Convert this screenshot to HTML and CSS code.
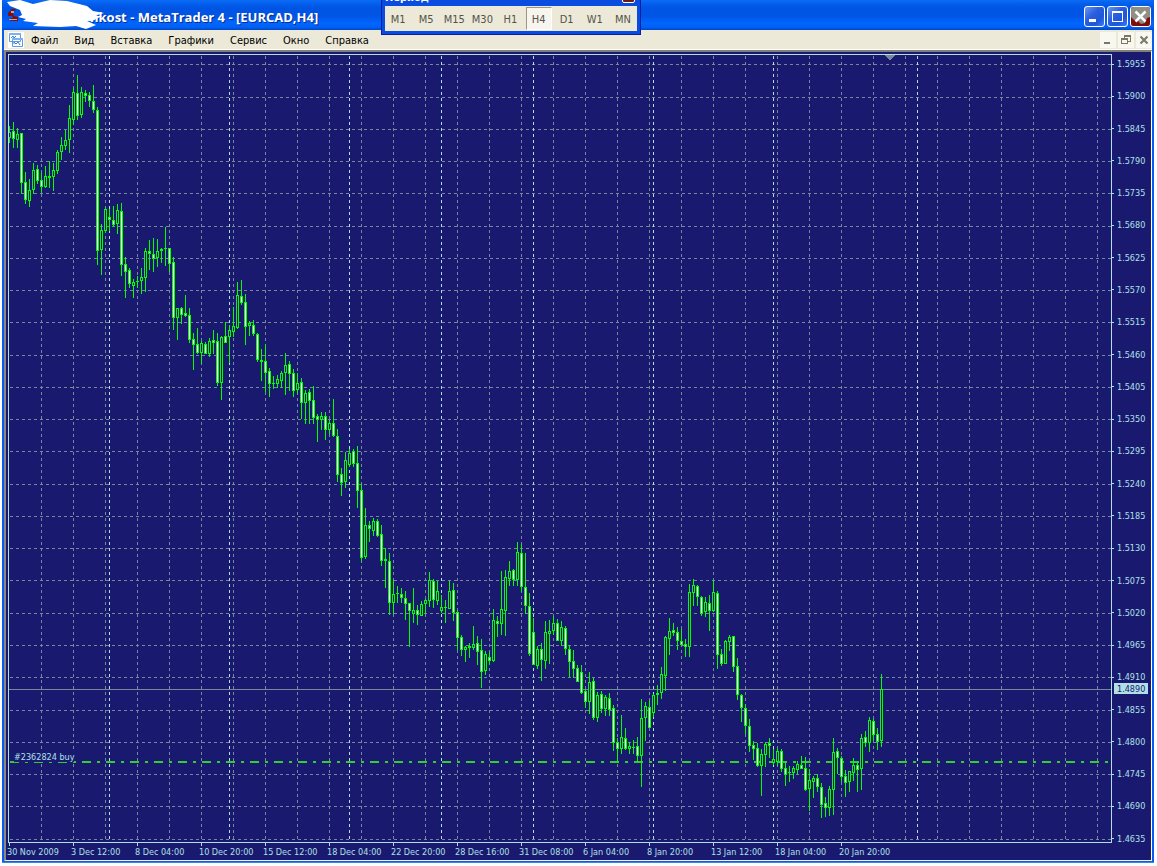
FILE: index.html
```
<!DOCTYPE html>
<html lang="ru">
<head>
<meta charset="utf-8">
<title>MetaTrader 4 - [EURCAD,H4]</title>
<link rel="stylesheet" href="styles.css">
</head>
<body>
<main class="window">
  <header class="titlebar">
    <svg class="scribble" width="104" height="32" viewBox="0 0 104 32" aria-hidden="true">
      <path d="M6 14l4-4 4 0-3 4 1 3 4 1v4H9l-3-2 5-1-1-2-4 0z" fill="#7b1010"/>
      <path d="M9 12h3v2H9zM7 20h8v1H7z" fill="#c9a29c"/>
      <path d="M5 3 18 1 31 5 48 1 65 2 85 7 91 12 102 14 92 17 100 17 90 22 85 22 94 26 84 30 74 27 58 28 31 27 36 24 21 22 24 20 16 18 20 16 18 11 8 7z" fill="#fff"/>
    </svg>
    <h1 class="title">nkost - MetaTrader 4 - [EURCAD,H4]</h1>
    <div class="controls">
      <button class="control" aria-label="Свернуть"><svg width="19" height="19" viewBox="0 0 19 19"><path d="M4 12h7v3H4z" fill="#fff"/></svg></button>
      <button class="control" aria-label="Развернуть"><svg width="19" height="19" viewBox="0 0 19 19"><path d="M4 4h11v11H4zM5 6v8h9V6z" fill="#fff" fill-rule="evenodd"/></svg></button>
      <button class="control control-close" aria-label="Закрыть"><svg width="19" height="19" viewBox="0 0 19 19"><path d="M0 0h19v10l-3 1-2 5-4 1-3-3-4-1-3-3z" fill="#8f8f86"/><path d="m4.500 4.500 10 10m0-10-10 10" stroke="#fff" stroke-width="2.500"/></svg></button>
    </div>
  </header>

  <nav class="menubar">
    <svg class="doc-icon" width="16" height="16" viewBox="0 0 16 16" aria-hidden="true">
      <path d="M0 0h16v16H0z" fill="#fff"/>
      <path d="M1.500 1.500h11v8h-11zM4.500 6.500h10v8h-10z" fill="#fff" stroke="#5b9be6"/>
      <path d="M1 1h12v2H1zM4 6h11v2H4z" fill="#7db2ee"/>
      <path d="M3 6l2-2 1 2 2-2M6 12v-2l2 2 2-2 2 3" fill="none" stroke="#3c7fd6"/>
    </svg>
    <button class="menu">Файл</button>
    <button class="menu">Вид</button>
    <button class="menu">Вставка</button>
    <button class="menu">Графики</button>
    <button class="menu">Сервис</button>
    <button class="menu">Окно</button>
    <button class="menu">Справка</button>
    <div class="doc-controls">
      <button class="doc-control" aria-label="Свернуть график"><svg width="16" height="16" viewBox="0 0 16 16"><path d="M4 10h6v2H4z" fill="#7a7769"/></svg></button>
      <button class="doc-control" aria-label="Восстановить график"><svg width="16" height="16" viewBox="0 0 16 16"><path d="M6 3h7v7h-3V9h2V5H7v1H6zM3 6h7v6H3zM4 8v3h5V8z" fill="#7a7769" fill-rule="evenodd"/></svg></button>
      <button class="doc-control" aria-label="Закрыть график"><svg width="16" height="16" viewBox="0 0 16 16"><path d="m4.500 4.500 7 7m0-7-7 7" stroke="#7a7769" stroke-width="2"/></svg></button>
    </div>
  </nav>

  <section class="chart">
    <div class="plot">
      <svg class="candles" id="candles" role="img" aria-label="EURCAD, H4"></svg>
      <span class="order">#2362824 buy</span>
    </div>
    <div class="prices">
      <span>1.5955</span><span>1.5900</span><span>1.5845</span><span>1.5790</span><span>1.5735</span>
      <span>1.5680</span><span>1.5625</span><span>1.5570</span><span>1.5515</span><span>1.5460</span>
      <span>1.5405</span><span>1.5350</span><span>1.5295</span><span>1.5240</span><span>1.5185</span>
      <span>1.5130</span><span>1.5075</span><span>1.5020</span><span>1.4965</span><span>1.4910</span>
      <span>1.4855</span><span>1.4800</span><span>1.4745</span><span>1.4690</span><span>1.4635</span>
      <strong class="bid">1.4890</strong>
    </div>
    <div class="dates">
      <span>30 Nov 2009</span><span>3 Dec 12:00</span><span>8 Dec 04:00</span><span>10 Dec 20:00</span>
      <span>15 Dec 12:00</span><span>18 Dec 04:00</span><span>22 Dec 20:00</span><span>28 Dec 16:00</span>
      <span>31 Dec 08:00</span><span>6 Jan 04:00</span><span>8 Jan 20:00</span><span>13 Jan 12:00</span>
      <span>18 Jan 04:00</span><span>20 Jan 20:00</span>
    </div>
  </section>

  <aside class="palette">
    <div class="palette-title"><span class="palette-name">Период</span><button class="palette-close" aria-label="Закрыть"></button></div>
    <div class="periods">
      <button class="period">M1</button><button class="period">M5</button><button class="period">M15</button>
      <button class="period">M30</button><button class="period">H1</button><button class="period period-on">H4</button>
      <button class="period">D1</button><button class="period">W1</button><button class="period">MN</button>
    </div>
  </aside>
</main>
<script src="chart.js"></script>
</body>
</html>
```
FILE: styles.css
```
* { box-sizing: border-box; }
body {
  margin: 0;
  background: #fff;
  font: 11px/14px "DejaVu Sans Condensed", "Noto Sans", sans-serif;
}
button { margin: 0; padding: 0; border: 0; background: none; font: inherit; color: inherit; }
svg { display: block; }

.window {
  position: relative;
  margin: 0 3px 3px 2px;
  padding: 0 2px 2px;
  background: #0a5cf0;
  box-shadow: inset 0 -1px #3a86e8;
}

.titlebar {
  display: flex;
  align-items: center;
  height: 30px;
  margin: 0 -2px;
  padding-right: 3px;
  background: linear-gradient(#0a6cf8 0, #0462ee 3px, #0054e3 8px, #0055e5 16px, #0066ff 23px, #0062f5 27px, #0046c8 30px);
}
.scribble { position: relative; z-index: 1; flex: none; width: 104px; margin-right: -16px; }
.title {
  flex: 1;
  margin: 0;
  padding-top: 4px;
  font: bold 13px/18px "Open Sans", "Noto Sans", sans-serif;
  color: #fff;
  text-shadow: 1px 1px #0a2a8c;
  white-space: nowrap;
}
.controls { display: flex; gap: 2px; padding-top: 3px; }
.control {
  width: 21px;
  height: 21px;
  border: 1px solid #fff;
  border-radius: 3px;
  background: linear-gradient(135deg, #6d97f5, #2a5fe0 40%, #1f55d8 70%, #3f7cf4);
}
.control-close { background: #820a0a; overflow: hidden; }

.menubar {
  display: flex;
  align-items: center;
  height: 20px;
  padding-left: 4px;
  background: #ece9d8;
  border-bottom: 1px solid #fff;
  color: #000;
}
.doc-icon { margin-right: 7px; }
.menu { margin-right: 16px; padding-top: 2px; line-height: 17px; white-space: nowrap; }
.doc-controls { display: flex; gap: 2px; margin-left: auto; }
.doc-control { width: 16px; height: 16px; background: #f8f7f0; }

.chart {
  display: grid;
  grid-template-columns: 1fr 39px;
  grid-template-rows: 789px 17px;
  padding: 2px 0 0 2px;
  border-top: 2px solid #808078;
  border-left: 2px solid #8c897c;
  border-right: 1px solid #fff;
  border-bottom: 1px solid #f4f2e8;
  background: #191970;
  font: 9px/12px "DejaVu Sans Condensed", "Noto Sans", sans-serif;
  color: #b0e0e6;
}
.plot {
  position: relative;
  border: 1px solid #b0e0e6;
  min-width: 0;
}
.candles { width: 100%; height: 100%; shape-rendering: crispEdges; }
.order {
  position: absolute;
  left: 5px;
  top: 696px;
  height: 11px;
  line-height: 12px;
  background: #191970;
}
.prices {
  position: relative;
  display: flex;
  flex-direction: column;
  justify-content: space-between;
  margin: 4px 0 -2px;
}
.prices span { display: flex; align-items: center; }
.prices span::before { content: ""; width: 2px; height: 1px; margin-right: 3px; background: #b0e0e6; }
.bid {
  position: absolute;
  left: 2px;
  top: 625px;
  width: 34px;
  height: 11px;
  padding-left: 3px;
  background: #b0e0e6;
  font-weight: normal;
  line-height: 12px;
  color: #191970;
}
.dates { grid-column: 1 / -1; display: flex; margin-left: -1px; }
.dates span { position: relative; flex: 0 0 64px; padding-top: 3px; white-space: nowrap; }
.dates span::before { content: ""; position: absolute; left: 2px; top: 0; width: 1px; height: 3px; background: #b0e0e6; }

.palette {
  position: absolute;
  left: 379px;
  top: 0;
  width: 260px;
  padding: 0 3px 3px;
  background: #0a4ce0;
  border: solid #0a1f9c;
  border-width: 0 1px 1px;
}
.palette-title { display: flex; justify-content: space-between; height: 6px; overflow: hidden; }
.palette-name { margin-top: -10px; font: bold 11px/16px "DejaVu Sans Condensed", sans-serif; color: #fff; }
.palette-close { width: 13px; height: 13px; margin: -10px 2px 0 0; border: 1px solid #fff; border-radius: 2px; background: #6e1a14; }
.periods { display: flex; gap: 2px; padding: 1px 1px 1px 0; background: #ece9d8; color: #55534a; }
.period { flex: 1; height: 23px; padding-top: 2px; border: 1px solid transparent; font-size: 11px; }
.period-on { background: #f7f5ee; border-color: #9a978a #fff #fff #9a978a; }
```
FILE: chart.js
```
// Candles four pixels apart: [falling, high, top, bottom, low] in window rows.
const candles = [
[0,126,132,137,142],[1,122,131,138,147],[0,128,134,139,147],[1,133,133,182,193],[1,172,182,199,203],[0,179,190,200,206],
[0,163,170,189,193],[1,165,169,180,183],[1,173,180,186,192],[0,166,176,186,187],[0,161,176,177,187],[0,163,170,176,190],
[0,150,152,170,173],[0,137,145,151,159],[0,130,140,145,149],[0,105,118,139,152],[0,88,92,119,124],[1,75,93,115,119],
[0,87,92,114,117],[1,90,93,95,101],[1,92,95,100,106],[1,85,101,109,112],[1,107,110,250,264],[0,224,230,249,274],
[0,207,209,230,232],[1,209,217,219,230],[1,206,220,224,226],[0,204,210,223,233],[1,203,211,264,275],[1,257,264,271,297],
[1,268,270,283,287],[0,279,282,285,297],[0,276,281,281,287],[0,268,277,280,293],[0,248,251,277,291],[1,240,251,253,269],
[1,238,254,258,271],[0,239,251,257,266],[1,248,249,250,262],[0,227,248,248,265],[1,248,248,263,271],[1,257,262,317,329],
[0,308,308,317,339],[1,307,308,314,323],[1,295,313,315,316],[1,308,315,339,342],[1,333,339,344,369],[1,328,344,352,353],
[0,341,343,352,363],[1,342,344,353,353],[0,338,341,353,356],[1,330,340,342,353],[1,333,341,382,385],[0,336,337,382,399],
[1,322,336,342,342],[0,325,330,336,362],[0,307,326,331,336],[0,282,295,327,328],[1,280,296,302,304],[1,294,302,326,344],
[0,321,323,325,335],[1,320,325,333,335],[1,333,334,359,361],[1,349,360,361,380],[1,344,361,372,391],[1,368,371,383,396],
[0,376,383,383,388],[0,375,379,383,387],[0,371,373,380,387],[0,353,365,372,394],[1,361,364,373,390],[1,369,373,390,396],
[0,373,383,389,393],[1,378,382,402,418],[0,390,393,402,423],[1,389,392,400,423],[1,386,400,417,423],[1,414,416,419,441],
[0,412,416,419,429],[1,412,416,429,439],[0,420,423,429,433],[1,399,423,435,436],[1,429,436,474,481],[1,468,474,482,495],
[0,452,460,481,487],[0,449,453,464,466],[1,449,451,463,466],[1,446,463,490,507],[1,484,490,557,561],[0,508,525,556,558],
[1,521,525,528,541],[0,518,521,530,535],[1,519,521,535,536],[1,525,534,560,565],[1,548,559,560,587],[1,553,561,602,614],
[0,580,594,602,613],[0,586,593,593,602],[1,588,594,597,602],[1,591,598,603,619],[1,603,603,610,646],[0,588,610,613,622],
[1,605,610,614,624],[0,601,604,615,615],[0,599,600,603,613],[0,572,580,600,606],[1,579,581,599,607],[0,581,591,600,604],
[0,595,607,610,612],[0,600,607,607,622],[0,581,591,608,608],[1,583,590,612,620],[1,610,612,637,649],[1,635,637,649,655],
[0,646,647,649,661],[1,643,646,647,657],[0,626,644,647,649],[1,636,643,651,664],[1,639,650,671,687],[0,651,654,670,674],
[1,652,657,660,664],[0,609,620,660,661],[1,616,621,623,636],[0,571,609,623,634],[0,570,577,610,635],[0,561,571,578,585],
[1,569,570,579,585],[0,542,552,579,585],[1,544,553,586,591],[1,553,587,605,613],[1,593,606,653,655],[1,618,632,664,664],
[0,646,649,665,668],[1,643,649,659,680],[0,621,632,660,668],[0,620,631,633,663],[0,616,623,630,634],[1,619,623,640,640],
[0,621,627,640,645],[1,626,628,648,654],[1,645,649,661,676],[1,650,661,668,677],[1,665,668,681,681],[1,665,672,692,693],
[1,689,691,701,707],[0,672,682,701,713],[1,678,681,717,719],[0,692,695,717,721],[1,691,694,708,712],[0,695,697,708,715],
[1,693,698,709,715],[1,705,708,742,750],[1,738,742,748,762],[0,715,737,748,753],[1,728,738,748,749],[0,742,746,748,753],
[0,740,747,747,753],[1,737,746,755,761],[0,699,718,755,786],[0,702,706,717,740],[1,700,707,727,727],[0,694,695,712,716],
[0,685,693,694,704],[0,667,674,692,698],[0,636,637,675,690],[0,618,631,638,654],[1,623,630,632,635],[1,627,632,640,649],
[1,629,641,644,645],[1,639,644,646,656],[0,584,592,646,656],[0,579,585,592,605],[1,585,586,596,605],[1,596,597,613,615],
[0,597,602,611,616],[1,595,603,610,630],[0,580,592,610,611],[1,591,593,654,668],[1,649,654,663,665],[0,640,641,663,663],
[0,635,637,641,650],[1,636,636,666,671],[1,658,666,694,699],[1,694,695,707,721],[1,704,708,725,733],[1,719,726,745,751],
[1,741,745,748,759],[1,743,748,765,766],[0,749,754,765,795],[0,742,744,754,766],[1,738,743,745,757],[0,749,759,762,764],
[0,748,751,761,765],[1,749,751,768,771],[1,763,768,774,785],[0,766,772,772,781],[0,766,768,772,778],[0,761,764,769,773],
[1,756,765,768,768],[1,757,768,789,790],[0,769,780,788,810],[0,776,778,781,797],[1,774,778,786,791],[1,783,787,804,817],
[1,797,803,807,816],[0,786,789,807,815],[0,738,752,789,814],[1,748,751,757,773],[1,756,758,776,781],[1,770,776,782,796],
[0,771,771,781,791],[0,758,765,772,780],[1,761,765,769,791],[0,734,738,768,789],[1,731,737,742,746],[0,717,720,742,751],
[1,719,721,734,740],[1,728,734,741,749],[0,674,689,740,746]
];
const LEFT = 9, TOP = 55, STEP = 4, FAR = 4000, BOTTOM = 842;
const rows = [64,97,129,161,193,226,258,290,322,355,387,419,451,484,516,548,580,613,645,677,710,742,774,806,839];
const separators = [109,229,349,441,533,653,773,917];

const path = (d, color, width = 1, dash = '') =>
  `<path d="${d}" fill="none" stroke="${color}" stroke-width="${width}" stroke-dasharray="${dash}"/>`;
const box = (x, y0, y1, w) => `M${x} ${y0}h${w}V${y1 + 1}h${-w}z`;

let rowPath = '', columnPath = '', separatorPath = '';
rows.forEach(y => { rowPath += `M10 ${y + 0.5}H${FAR}`; });
for (let x = 41; x < FAR; x += 32) columnPath += `M${x + 0.5} 56V${BOTTOM}`;
separators.forEach(x => { separatorPath += `M${x + 0.5} 56V${BOTTOM}`; });

let outline = '', rising = '', falling = '';
candles.forEach(([down, high, top, bottom, low], i) => {
  const x = LEFT + i * STEP;
  outline += box(x, high, low, 1) + box(x - 1, top, bottom, 3);
  if (bottom - top > 1) {
    const inner = box(x, top + 1, bottom - 1, 1);
    if (down) falling += inner; else rising += inner;
  }
});

document.getElementById('candles').innerHTML =
  `<g transform="translate(${-LEFT} ${-TOP})">` +
  path(rowPath, '#778899', 1, '3 3') +
  path(columnPath, '#778899', 1, '3 3') +
  path(separatorPath, '#b0e0e6', 1, '3 3') +
  path(`M9 689.5H${FAR}`, '#778899') +
  path(`M10 762H${FAR}`, '#32cd32', 2, '9 6 3 6') +
  `<path d="${outline}" fill="#0f0"/><path d="${rising}" fill="#191970"/><path d="${falling}" fill="#fff"/>` +
  '<path d="M884 55h11l-5 5h-1z" fill="#778899"/></g>';
```
